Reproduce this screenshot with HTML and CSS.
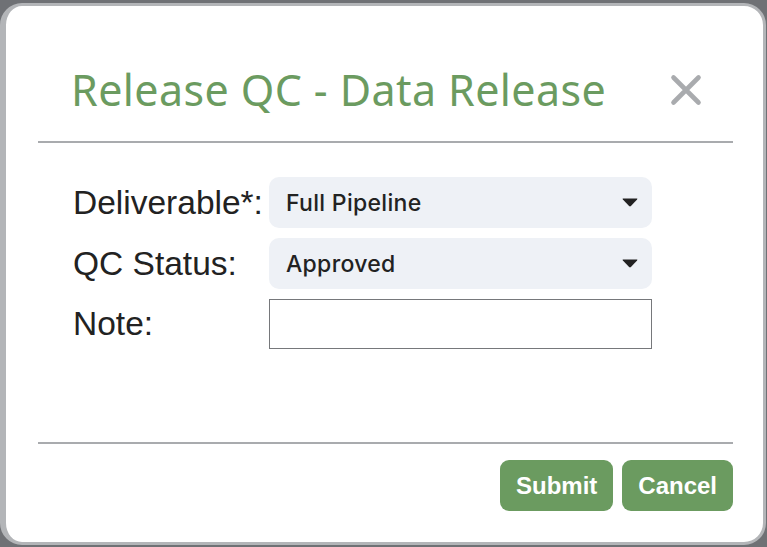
FILE: index.html
```html
<!DOCTYPE html>
<html lang="en">
<head>
<meta charset="utf-8">
<title>Release QC - Data Release</title>
<link rel="stylesheet" href="styles.css">
</head>
<body>
<div class="modal">
  <div class="modal-header">
    <h1 class="modal-title">Release QC - Data Release</h1>
    <button class="close" type="button" aria-label="Close">
      <svg width="32" height="32" viewBox="0 0 32 32"><path d="M3.5 3.5 L28.5 28.5 M28.5 3.5 L3.5 28.5" stroke="#a9abae" stroke-width="4.6" stroke-linecap="round" fill="none"/></svg>
    </button>
  </div>
  <div class="modal-body">
    <div class="form-grid">
      <label class="form-label">Deliverable*:</label>
      <div class="select"><span>Full Pipeline</span><svg class="caret" width="16" height="9" viewBox="0 0 16 9"><path d="M1.2 0.5 H14.8 Q16 0.5 15.1 1.5 L8.9 8 Q8 8.9 7.1 8 L0.9 1.5 Q0 0.5 1.2 0.5 Z" fill="#222"/></svg></div>
      <label class="form-label">QC Status:</label>
      <div class="select"><span>Approved</span><svg class="caret" width="16" height="9" viewBox="0 0 16 9"><path d="M1.2 0.5 H14.8 Q16 0.5 15.1 1.5 L8.9 8 Q8 8.9 7.1 8 L0.9 1.5 Q0 0.5 1.2 0.5 Z" fill="#222"/></svg></div>
      <label class="form-label">Note:</label>
      <input class="text-input" type="text">
    </div>
  </div>
  <div class="modal-footer">
    <button class="btn" type="button">Submit</button>
    <button class="btn" type="button">Cancel</button>
  </div>
</div>
</body>
</html>
```
FILE: styles.css
```css
html, body {
  margin: 0;
  height: 100%;
}
body {
  background: #6f7175;
  font-family: "Liberation Sans", Arial, sans-serif;
  color: #222;
  overflow: hidden;
}
.modal {
  box-sizing: border-box;
  width: 766px;
  height: 542px;
  margin-top: 3px;
  background: #fff;
  border: 3px solid #b3b5b8;
  border-left-width: 6px;
  border-radius: 22px;
  padding: 0 30px 0 32px;
  display: flex;
  flex-direction: column;
}
.modal-header {
  display: flex;
  align-items: center;
  justify-content: space-between;
  padding: 60px 31px 27px 33px;
  border-bottom: 2px solid #a9abae;
}
.modal-title {
  margin: 0;
  font-family: "Noto Sans", sans-serif;
  font-weight: 400;
  font-size: 43px;
  letter-spacing: 0.4px;
  line-height: 48px;
  color: #6b9b60;
}
.close {
  border: 0;
  background: none;
  padding: 0;
  width: 32px;
  height: 32px;
  display: block;
}
.close svg { display: block; }
.modal-body {
  flex: 1;
  padding: 34px 0 0 35px;
}
.form-grid {
  display: grid;
  grid-template-columns: 196px 383px;
  row-gap: 10px;
  align-items: center;
}
.form-label {
  font-size: 33.5px;
  color: #222;
}
.select {
  box-sizing: border-box;
  height: 51px;
  background: #eef1f6;
  border-radius: 10px;
  padding: 0 14px 0 17px;
  display: flex;
  align-items: center;
  justify-content: space-between;
  font-family: Inter, sans-serif;
  font-weight: 500;
  font-size: 23px;
  letter-spacing: 0.3px;
  color: #222;
}
.caret { display: block; }
.text-input {
  box-sizing: border-box;
  height: 50px;
  width: 100%;
  margin: 0;
  border: 1px solid #76787b;
  border-radius: 0;
  background: #fff;
}
.modal-footer {
  display: flex;
  justify-content: flex-end;
  gap: 9px;
  padding: 16px 0 31px;
  border-top: 2px solid #a9abae;
}
.btn {
  height: 51px;
  padding: 0 16px;
  border: 0;
  border-radius: 9px;
  background: #6b9b60;
  color: #fff;
  font-family: "Liberation Sans", Arial, sans-serif;
  font-weight: 700;
  font-size: 24px;
}
```
